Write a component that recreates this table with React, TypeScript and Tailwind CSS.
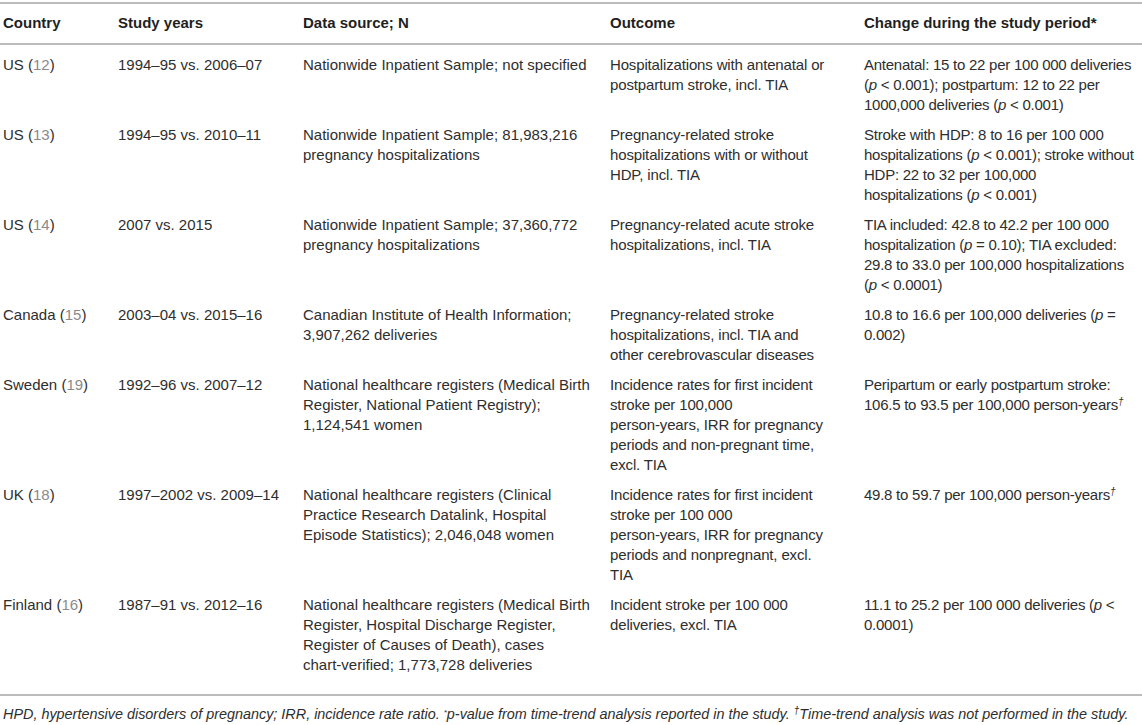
import type { ReactNode } from "react";

const P = () => <i>p</i>;
const Ref = ({ n }: { n: number }) => (
  <>
    (<span className="text-[#8a8a8a]">{n}</span>)
  </>
);
const Dag = () => <sup className="italic text-[10px] leading-none">†</sup>;

type Row = {
  country: ReactNode;
  years: string;
  source: ReactNode[];
  outcome: ReactNode[];
  change: ReactNode[];
};

const rows: Row[] = [
  {
    country: <>US <Ref n={12} /></>,
    years: "1994–95 vs. 2006–07",
    source: ["Nationwide Inpatient Sample; not specified"],
    outcome: ["Hospitalizations with antenatal or", "postpartum stroke, incl. TIA"],
    change: [
      "Antenatal: 15 to 22 per 100 000 deliveries",
      <>(<P /> &lt; 0.001); postpartum: 12 to 22 per</>,
      <>1000,000 deliveries (<P /> &lt; 0.001)</>,
    ],
  },
  {
    country: <>US <Ref n={13} /></>,
    years: "1994–95 vs. 2010–11",
    source: ["Nationwide Inpatient Sample; 81,983,216", "pregnancy hospitalizations"],
    outcome: ["Pregnancy-related stroke", "hospitalizations with or without", "HDP, incl. TIA"],
    change: [
      "Stroke with HDP: 8 to 16 per 100 000",
      <>hospitalizations (<P /> &lt; 0.001); stroke without</>,
      "HDP: 22 to 32 per 100,000",
      <>hospitalizations (<P /> &lt; 0.001)</>,
    ],
  },
  {
    country: <>US <Ref n={14} /></>,
    years: "2007 vs. 2015",
    source: ["Nationwide Inpatient Sample; 37,360,772", "pregnancy hospitalizations"],
    outcome: ["Pregnancy-related acute stroke", "hospitalizations, incl. TIA"],
    change: [
      "TIA included: 42.8 to 42.2 per 100 000",
      <>hospitalization (<P /> = 0.10); TIA excluded:</>,
      "29.8 to 33.0 per 100,000 hospitalizations",
      <>(<P /> &lt; 0.0001)</>,
    ],
  },
  {
    country: <>Canada <Ref n={15} /></>,
    years: "2003–04 vs. 2015–16",
    source: ["Canadian Institute of Health Information;", "3,907,262 deliveries"],
    outcome: ["Pregnancy-related stroke", "hospitalizations, incl. TIA and", "other cerebrovascular diseases"],
    change: [<>10.8 to 16.6 per 100,000 deliveries (<P /> =</>, "0.002)"],
  },
  {
    country: <>Sweden <Ref n={19} /></>,
    years: "1992–96 vs. 2007–12",
    source: ["National healthcare registers (Medical Birth", "Register, National Patient Registry);", "1,124,541 women"],
    outcome: [
      "Incidence rates for first incident",
      "stroke per 100,000",
      "person-years, IRR for pregnancy",
      "periods and non-pregnant time,",
      "excl. TIA",
    ],
    change: ["Peripartum or early postpartum stroke:", <>106.5 to 93.5 per 100,000 person-years<Dag /></>],
  },
  {
    country: <>UK <Ref n={18} /></>,
    years: "1997–2002 vs. 2009–14",
    source: ["National healthcare registers (Clinical", "Practice Research Datalink, Hospital", "Episode Statistics); 2,046,048 women"],
    outcome: [
      "Incidence rates for first incident",
      "stroke per 100 000",
      "person-years, IRR for pregnancy",
      "periods and nonpregnant, excl.",
      "TIA",
    ],
    change: [<>49.8 to 59.7 per 100,000 person-years<Dag /></>],
  },
  {
    country: <>Finland <Ref n={16} /></>,
    years: "1987–91 vs. 2012–16",
    source: [
      "National healthcare registers (Medical Birth",
      "Register, Hospital Discharge Register,",
      "Register of Causes of Death), cases",
      "chart-verified; 1,773,728 deliveries",
    ],
    outcome: ["Incident stroke per 100 000", "deliveries, excl. TIA"],
    change: [<>11.1 to 25.2 per 100 000 deliveries (<P /> &lt;</>, "0.0001)"],
  },
];

const Lines = ({ items, className = "" }: { items: ReactNode[]; className?: string }) => (
  <div className={`flex flex-col ${className}`}>
    {items.map((l, i) => (
      <span key={i} className="whitespace-nowrap">
        {l}
      </span>
    ))}
  </div>
);

const cols = "grid grid-cols-[115px_185px_307px_254px_1fr]";

export default function App() {
  return (
    <div className="w-[1142px] h-[725px] bg-white text-[#2e2e2e] font-['Liberation_Sans',Arial,sans-serif] text-[15px] leading-[20px] pt-[2px] overflow-hidden">
      <div className="border-t-2 border-b-2 border-[#bcbcbc]">
        {/* header */}
        <div className={`${cols} pl-[3px] pt-[9px] pb-[10px] font-bold text-[#1f1f1f] border-b-2 border-[#bcbcbc]`}>
          <span>Country</span>
          <span>Study years</span>
          <span>Data source; N</span>
          <span>Outcome</span>
          <span>Change during the study period*</span>
        </div>

        {rows.map((r, i) => (
          <div
            key={i}
            className={`${cols} pl-[3px] ${i === 0 ? "pt-[10px]" : "pt-[6px]"} ${i === rows.length - 1 ? "pb-[19px]" : "pb-[4px]"}`}
          >
            <span className="whitespace-nowrap">{r.country}</span>
            <span className="whitespace-nowrap">{r.years}</span>
            <Lines items={r.source} />
            <Lines items={r.outcome} className="tracking-[-0.15px]" />
            <Lines items={r.change} className="tracking-[-0.25px]" />
          </div>
        ))}
      </div>

      <p className="pl-[3px] pt-[9px] italic text-[14.4px] leading-[18px] whitespace-nowrap">
        HPD, hypertensive disorders of pregnancy; IRR, incidence rate ratio.{" "}
        <sup className="text-[8px]">*</sup>p-value from time-trend analysis reported in the study.{" "}
        <sup className="text-[10px]">†</sup>Time-trend analysis was not performed in the study.
      </p>
    </div>
  );
}
